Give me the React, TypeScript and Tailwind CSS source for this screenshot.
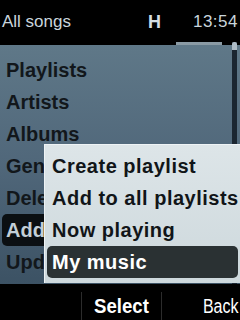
import React from 'react';

const font = { fontFamily: '"Liberation Sans", Arial, sans-serif' };

const listItems = ['Playlists', 'Artists', 'Albums', 'Genres', 'Delete', 'Add to', 'Update'];
const menuItems = ['Create playlist', 'Add to all playlists', 'Now playing', 'My music'];

export default function App() {
  return (
    <div className="w-[240px] h-[320px] bg-black flex flex-col overflow-hidden" style={font}>
      {/* status bar */}
      <div className="h-[45px] flex items-start pt-[9px] px-[2px] text-[17px] text-[#c9d5dc]">
        <span className="w-[146px]">All songs</span>
        <span className="font-bold text-[18px] text-[#d4dee4]">H</span>
        <span className="ml-auto tracking-[0.5px]">13:54</span>
      </div>

      {/* main panel */}
      <div className="relative h-[239px] bg-gradient-to-b from-[#5f7888] via-[#50677a] to-[#3c5264] flex">
        <div className="absolute top-[-3px] left-[176px] w-[46px] h-[3px] bg-[#8a9aa4]" />
        <div className="flex-1 flex flex-col pt-[9px] px-[2px]">
          {listItems.map((t, i) => (
            <div
              key={t}
              className={`h-[32px] leading-[32px] pl-[4px] text-[20px] font-bold rounded-[5px] whitespace-nowrap ${
                i === 5 ? 'bg-[#0b0f12] text-[#c3cfd7]' : 'text-[#12171b]'
              }`}
            >
              <span className={`inline-block overflow-hidden align-top ${i >= 3 ? 'max-w-[38px]' : ''}`}>{t}</span>
            </div>
          ))}
        </div>
        <div className="w-[5px] mr-[3px] mt-[-3px] bg-[#1b2631] flex flex-col">
          <div className="h-[8px] bg-[#aebcc6] rounded-t-[2px]" />
        </div>

        {/* popup menu */}
        <div className="absolute left-[44px] top-[99px] right-0 h-[139px] bg-gradient-to-b from-[#dde5e8] to-[#cdd8dc] border-l border-t border-[#eef3f5] pt-[5px] px-[2px]">
          {menuItems.map((t, i) => (
            <div
              key={t}
              className={`h-[32px] leading-[32px] pl-[5px] text-[20px] font-bold tracking-[0.5px] rounded-[5px] whitespace-nowrap ${
                i === 3 ? 'bg-[#2a3133] text-white' : 'text-[#111518]'
              }`}
            >
              {t}
            </div>
          ))}
        </div>
      </div>

      {/* soft keys */}
      <div className="flex-1 flex items-end pb-[2px] text-[20px] leading-[23px] text-white">
        <div className="w-[81px]" />
        <div className="w-px h-[28px] mb-[-2px] bg-[#2c2c2c]" />
        <div className="w-[79px] text-center font-bold">
          <span className="inline-block scale-x-[0.93]">Select</span>
        </div>
        <div className="w-px h-[28px] mb-[-2px] bg-[#2c2c2c]" />
        <div className="flex-1 text-right pr-[2px]">
          <span className="inline-block origin-right scale-x-[0.8]">Back</span>
        </div>
      </div>
    </div>
  );
}
